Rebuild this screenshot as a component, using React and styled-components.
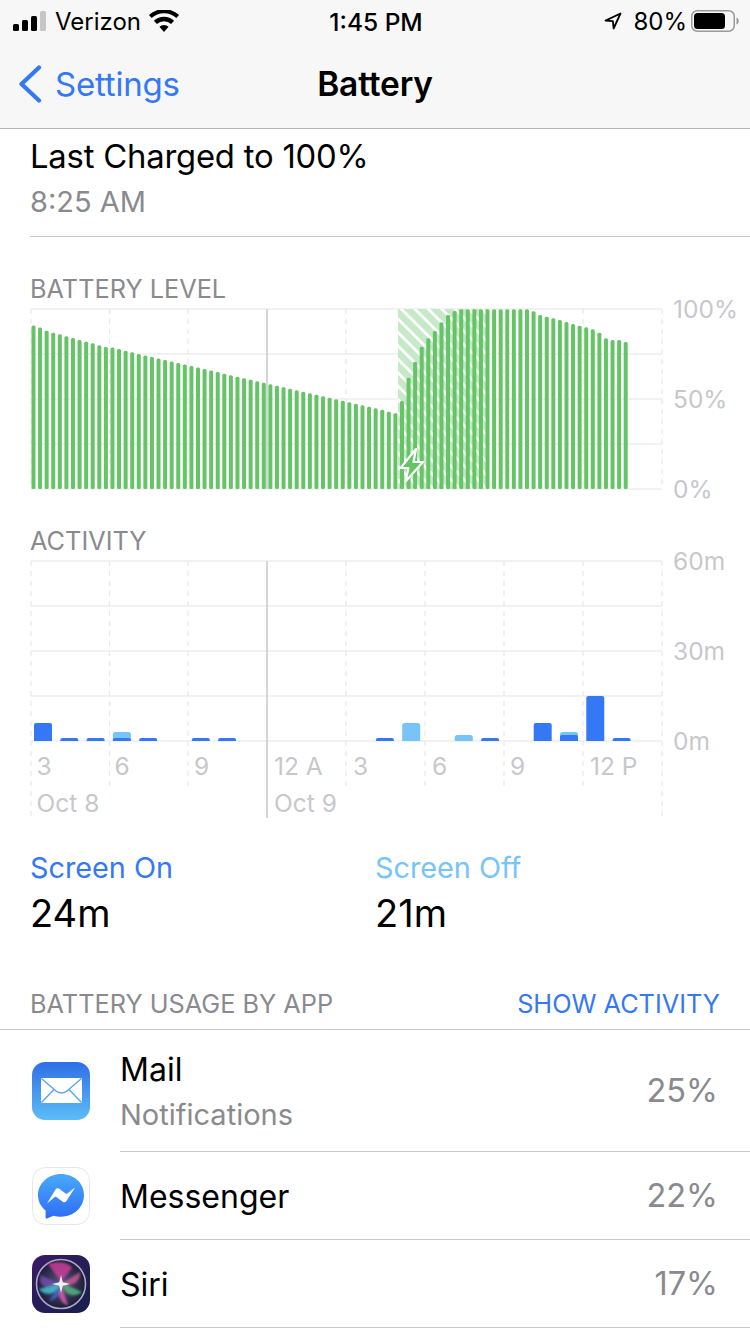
import React from "react";
import styled, { createGlobalStyle } from "styled-components";

const GlobalStyle = createGlobalStyle`
  html, body {
    margin: 0;
    padding: 0;
    background: #fff;
  }
  body {
    font-family: Inter, "Noto Sans", "Liberation Sans", sans-serif;
  }
`;

const BLUE = "#3478f6";
const LIGHT_BLUE = "#76c4f8";
const GREEN = "#65c466";
const GREY = "#8a8a8e";
const AXIS = "#c7c7cc";

const GRID_X = [31, 109.5, 188, 267, 346, 425, 504, 583, 662];

// top of each battery bar, read from the screenshot
const batteryTops = [
  325.5, 327.5, 330.7, 332.7, 334.3, 336.3, 338, 340, 341.7, 343.3, 345.3, 347,
  347.5, 349, 350.7, 352.3, 354,
];
for (let i = 17; i < 54; i++) batteryTops.push(354 + (i - 16) * 1.51);
batteryTops.push(
  411.7, 413.3, 401, 377.7, 361.7, 346.7, 338.3, 331, 322.3, 315, 311, 309.3,
);
for (let i = 66; i < 76; i++) batteryTops.push(309.3);
batteryTops.push(
  311.3, 315, 316.7, 318.3, 320, 322, 324, 325.7, 327.3, 329.3, 332.7, 338.3,
  340, 340, 342,
);

// slot index, screen on px, screen off px
const activity = [
  { slot: 0, on: 18, off: 0 },
  { slot: 1, on: 3, off: 0 },
  { slot: 2, on: 3, off: 0 },
  { slot: 3, on: 3, off: 6 },
  { slot: 4, on: 3, off: 0 },
  { slot: 6, on: 3, off: 0 },
  { slot: 7, on: 3, off: 0 },
  { slot: 13, on: 3, off: 0 },
  { slot: 14, on: 0, off: 18 },
  { slot: 16, on: 0, off: 6 },
  { slot: 17, on: 3, off: 0 },
  { slot: 19, on: 18, off: 0 },
  { slot: 20, on: 6, off: 3 },
  { slot: 21, on: 45, off: 0 },
  { slot: 22, on: 3, off: 0 },
];

const hourLabels = [
  ["3", 36.5],
  ["6", 114.5],
  ["9", 194],
  ["12 A", 274],
  ["3", 353],
  ["6", 432],
  ["9", 510],
  ["12 P", 590],
];

const Screen = styled.div`
  width: 750px;
  height: 1334px;
  overflow: hidden;
  background: #fff;
  color: #000;
`;

const Header = styled.header`
  height: 128px;
  background: #f7f7f7;
  border-bottom: 1px solid #b4b4b6;
`;

const StatusBar = styled.div`
  height: 42px;
  display: grid;
  grid-template-columns: 1fr auto 1fr;
  align-items: center;
  padding: 0 11px 0 13px;
  font-size: 24px;
`;

const StatusLeft = styled.div`
  display: flex;
  align-items: center;
  gap: 8px;
`;

const StatusRight = styled.div`
  display: flex;
  align-items: center;
  justify-content: flex-end;
  gap: 11px;
`;

const BatteryPercent = styled.span`
  margin-right: -7px;
`;

const Time = styled.div`
  font-weight: 500;
  font-size: 24.5px;
  padding-top: 1px;
`;

const NavBar = styled.nav`
  height: 84px;
  display: grid;
  grid-template-columns: 1fr auto 1fr;
  align-items: center;
  padding: 0 18px;
`;

const BackLink = styled.div`
  display: flex;
  align-items: center;
  gap: 13px;
  color: ${BLUE};
  font-size: 33px;
  letter-spacing: -0.2px;
`;

const NavTitle = styled.div`
  font-size: 33.5px;
  font-weight: 600;
  letter-spacing: -0.2px;
`;

const ChargeBlock = styled.section`
  height: 108px;
  margin-left: 30px;
  border-bottom: 1px solid #c8c8ca;
  box-sizing: border-box;
  padding-top: 6px;
`;

const ChargeTitle = styled.div`
  font-size: 32.8px;
  line-height: 42px;
  letter-spacing: -0.2px;
`;

const ChargeTime = styled.div`
  font-size: 29px;
  line-height: 50px;
  color: ${GREY};
`;

const SectionLabel = styled.div`
  padding-left: 30px;
  font-size: 25.3px;
  line-height: 22px;
  color: ${GREY};
  padding-top: ${(p) => p.$top}px;
`;

const ChartSvg = styled.svg`
  display: block;
  width: 750px;
  overflow: visible;
`;

const AxisText = styled.text`
  font-size: 24.5px;
  fill: ${AXIS};
  dominant-baseline: central;
`;

const Legend = styled.section`
  display: grid;
  grid-template-columns: 345px 1fr;
  padding: 27px 0 0 30px;
  height: 140px;
  box-sizing: border-box;
`;

const LegendName = styled.div`
  font-size: 28.8px;
  line-height: 38px;
  color: ${(p) => p.$color};
`;

const LegendValue = styled.div`
  font-size: 38px;
  line-height: 52px;
`;

const UsageHeader = styled.div`
  height: 68px;
  box-sizing: border-box;
  border-bottom: 1px solid #c8c8ca;
  display: flex;
  justify-content: space-between;
  align-items: flex-start;
  padding: 27px 30px 0;
  font-size: 25.3px;
  line-height: 30px;
  color: ${GREY};
`;

const ShowActivity = styled.span`
  color: ${BLUE};
`;

const AppRow = styled.div`
  display: flex;
  height: ${(p) => p.$height}px;
`;

const IconSlot = styled.div`
  width: 120px;
  flex: none;
  display: flex;
  align-items: center;
  padding-left: 32px;
  box-sizing: border-box;
`;

const RowBody = styled.div`
  flex: 1;
  display: flex;
  align-items: center;
  justify-content: space-between;
  padding-right: 32px;
  border-bottom: 1px solid #c8c8ca;
`;

const AppName = styled.div`
  font-size: 32px;
  line-height: 45px;
  padding-top: 2px;
`;

const AppNote = styled.div`
  font-size: 29px;
  line-height: 45px;
  color: ${GREY};
`;

const Percent = styled.div`
  font-size: 32.5px;
  color: ${GREY};
`;

const AppIcon = styled.svg`
  display: block;
  width: 58px;
  height: 58px;
`;

const StatusIcon = styled.svg`
  display: block;
  flex: none;
`;

const SignalIcon = () => (
  <StatusIcon width="34" height="20" viewBox="0 0 34 20">
    <rect x="0" y="13" width="6" height="7" rx="1.5" fill="#000" />
    <rect x="9" y="9" width="6" height="11" rx="1.5" fill="#000" />
    <rect x="18" y="5" width="6" height="15" rx="1.5" fill="#000" />
    <rect x="27" y="0" width="6" height="20" rx="1.5" fill="#c6c6c8" />
  </StatusIcon>
);

const WifiIcon = () => (
  <StatusIcon width="30" height="22" viewBox="0 0 30 22">
    <path
      d="M15 22l-4.6-5.2a6.8 6.8 0 0 1 9.2 0z M7.9 14l-3-3.3a15 15 0 0 1 20.2 0l-3 3.3a10.6 10.6 0 0 0-14.2 0z M2.6 8.1L0 5.1a22 22 0 0 1 30 0l-2.6 3a18.2 18.2 0 0 0-24.8 0z"
      fill="#000"
    />
  </StatusIcon>
);

const LocationIcon = () => (
  <StatusIcon width="18" height="18" viewBox="0 0 18 18">
    <path
      d="M16.500 1.500L1.500 8.600l7.400.6.7 7.300z"
      fill="none"
      stroke="#000"
      strokeWidth="1.800"
      strokeLinejoin="round"
    />
  </StatusIcon>
);

const BatteryIcon = () => (
  <StatusIcon width="48" height="22" viewBox="0 0 48 22">
    <rect x="0.75" y="0.75" width="42.5" height="20.5" rx="5.5" fill="none" stroke="#9a9a9c" strokeWidth="1.5" />
    <rect x="3" y="3" width="31" height="16" rx="3.5" fill="#000" />
    <path d="M45.500 7.500c1.400.5 2.200 1.900 2.200 3.500s-.8 3-2.200 3.500z" fill="#9a9a9c" />
  </StatusIcon>
);

const BackChevron = () => (
  <StatusIcon width="24" height="38" viewBox="0 0 24 38">
    <path
      d="M21 2.500L3.500 19 21 35.500"
      fill="none"
      stroke={BLUE}
      strokeWidth="4.200"
      strokeLinecap="round"
      strokeLinejoin="round"
    />
  </StatusIcon>
);

const MailIcon = () => (
  <AppIcon viewBox="0 0 58 58">
    <defs>
      <linearGradient id="mailBg" x1="0" y1="0" x2="0" y2="1">
        <stop offset="0" stopColor="#2f6fe6" />
        <stop offset="1" stopColor="#5dbdf7" />
      </linearGradient>
    </defs>
    <rect width="58" height="58" rx="13" fill="url(#mailBg)" />
    <rect x="9" y="16" width="41" height="25" rx="1" fill="#fff" />
    <path
      d="M9.500 16.500L24 29c3 2.600 8 2.600 11 0L49.500 16.500M9.500 40.500L22 27.500M49.500 40.500L37 27.500"
      fill="none"
      stroke="#5aa5f0"
      strokeWidth="1.400"
    />
  </AppIcon>
);

const MessengerIcon = () => (
  <AppIcon viewBox="0 0 58 58">
    <defs>
      <linearGradient id="msgBg" x1="0" y1="0" x2="0" y2="1">
        <stop offset="0" stopColor="#48aaf9" />
        <stop offset="1" stopColor="#2f6cf6" />
      </linearGradient>
    </defs>
    <rect x="0.5" y="0.5" width="57" height="57" rx="13" fill="#fff" stroke="#e6e6e8" />
    <path
      d="M29 7C16.300 7 6 16.400 6 28.100c0 6.200 2.900 11.700 7.600 15.500v7c0 .8.800 1.300 1.500 1l6.300-2.900a25 25 0 0 0 7.600 1.100c12.700 0 23-9.300 23-21.700S41.700 7 29 7z"
      fill="url(#msgBg)"
    />
    <path
      d="M15 36.500L23.500 22.500c.9-1.300 2.600-1.600 3.800-.7l6.300 4.700c.5.400 1.200.400 1.700 0L43 20.500 34.500 34c-.9 1.300-2.600 1.600-3.800.7l-6.300-4.700c-.5-.4-1.200-.4-1.700 0z"
      fill="#fff"
    />
  </AppIcon>
);

const SiriIcon = () => (
  <AppIcon viewBox="0 0 58 58">
    <defs>
      <linearGradient id="siriBg" x1="0" y1="0" x2="1" y2="1">
        <stop offset="0" stopColor="#3a1a66" />
        <stop offset="1" stopColor="#14204a" />
      </linearGradient>
      <radialGradient id="siriOrb" cx="0.5" cy="0.5" r="0.55">
        <stop offset="0" stopColor="#5a5a80" />
        <stop offset="1" stopColor="#161630" />
      </radialGradient>
      <filter id="siriBlur" x="-20%" y="-20%" width="140%" height="140%">
        <feGaussianBlur stdDeviation="1.300" />
      </filter>
    </defs>
    <rect width="58" height="58" rx="13" fill="url(#siriBg)" />
    <circle cx="29" cy="29" r="24.500" fill="url(#siriOrb)" stroke="#a8a8c4" strokeWidth="1.600" />
    <g filter="url(#siriBlur)">
      <path d="M29 27L16 9c10-3 20-2 24 4z" fill="#c93c98" opacity="0.85" />
      <path d="M27 29L9 20c-3 8 1 16 18 9z" fill="#7f52c0" opacity="0.7" />
      <path d="M29 29L48 17c1 8-6 16-19 12z" fill="#e0609a" opacity="0.7" />
      <path d="M30 28L50 37c-8 6-18 4-20-9z" fill="#4fb07a" opacity="0.9" />
      <path d="M28 29L7 34c7 8 17 6 21-5z" fill="#3fc4d4" opacity="0.85" />
      <path d="M29 29L36 50c-7-1-12-10-7-21z" fill="#d85aa8" opacity="0.85" />
      <path d="M29 29L17 46c7-1 13-7 12-17z" fill="#4a6fe0" opacity="0.7" />
    </g>
    <path d="M29 20l1.800 7.200 7.200 1.800-7.200 1.800L29 38l-1.800-7.200L20 29l7.200-1.800z" fill="#fff" opacity="0.9" />
  </AppIcon>
);

const BatteryChart = () => (
  <ChartSvg height="200" viewBox="0 300 750 200">
    <defs>
      <pattern
        id="chargeHatch"
        width="9.5"
        height="9.5"
        patternUnits="userSpaceOnUse"
        patternTransform="rotate(-45 398 309)"
      >
        <rect width="9.5" height="9.5" fill="#c6e9c8" />
        <rect width="2.800" height="9.5" fill="#fff" />
      </pattern>
    </defs>
    {[309, 354, 399, 444, 489].map((y) => (
      <line key={y} x1="31" x2="662" y1={y} y2={y} stroke="#eeeeee" strokeWidth="1.500" />
    ))}
    {GRID_X.map((x) => (
      <line
        key={x}
        x1={x}
        x2={x}
        y1="309"
        y2="489"
        stroke={x === 267 ? "#c9c9cb" : "#e8e8ea"}
        strokeWidth={x === 267 ? 1.500 : 1.200}
        strokeDasharray={x === 267 ? undefined : "5 5"}
      />
    ))}
    <rect x="398" y="309" width="90" height="180" fill="url(#chargeHatch)" />
    {batteryTops.map((top, i) => (
      <rect
        key={i}
        x={31.5 + i * 6.58}
        y={top}
        width="4"
        height={489 - top}
        rx="1.500"
        fill={GREEN}
      />
    ))}
    <path
      d="M416 449L400.500 468h8L405.500 481.500 423 462h-9.500z"
      fill={GREEN}
      stroke="#fff"
      strokeWidth="2.200"
      strokeLinejoin="round"
    />
    <AxisText x="673" y="309">100%</AxisText>
    <AxisText x="673" y="399">50%</AxisText>
    <AxisText x="673" y="489">0%</AxisText>
  </ChartSvg>
);

const ActivityChart = () => (
  <ChartSvg height="270" viewBox="0 552 750 270">
    {[561, 606, 651, 696, 741].map((y) => (
      <line key={y} x1="31" x2="662" y1={y} y2={y} stroke="#eeeeee" strokeWidth="1.500" />
    ))}
    {GRID_X.map((x) => {
      const isDay = x === 31 || x === 267 || x === 662;
      return (
        <line
          key={x}
          x1={x}
          x2={x}
          y1="561"
          y2={isDay ? 818 : 786}
          stroke={x === 267 ? "#c9c9cb" : "#e8e8ea"}
          strokeWidth={x === 267 ? 1.500 : 1.200}
          strokeDasharray={x === 267 ? undefined : "5 5"}
        />
      );
    })}
    {activity.map(({ slot, on, off }) => {
      const x = 34 + slot * 26.3;
      return (
        <g key={slot}>
          {off > 0 && (
            <path
              d={`M${x} 741v${-(on + off) + 2.5}a2.500 2.500 0 0 1 2.500 -2.500h13a2.500 2.500 0 0 1 2.500 2.500v${on + off - 2.5}z`}
              fill={LIGHT_BLUE}
            />
          )}
          {on > 0 && (
            <path
              d={`M${x} 741v${-on + 2}a2 2 0 0 1 2 -2h14a2 2 0 0 1 2 2v${on - 2}z`}
              fill={BLUE}
            />
          )}
        </g>
      );
    })}
    {hourLabels.map(([label, x], i) => (
      <AxisText key={i} x={x} y="766">{label}</AxisText>
    ))}
    <AxisText x="36.5" y="803">Oct 8</AxisText>
    <AxisText x="274" y="803">Oct 9</AxisText>
    <AxisText x="673" y="561">60m</AxisText>
    <AxisText x="673" y="651">30m</AxisText>
    <AxisText x="673" y="741">0m</AxisText>
  </ChartSvg>
);

const App = () => {
  return (
    <>
      <GlobalStyle />
      <Screen>
        <Header>
          <StatusBar>
            <StatusLeft>
              <SignalIcon />
              <span>Verizon</span>
              <WifiIcon />
            </StatusLeft>
            <Time>1:45 PM</Time>
            <StatusRight>
              <LocationIcon />
              <BatteryPercent>80%</BatteryPercent>
              <BatteryIcon />
            </StatusRight>
          </StatusBar>
          <NavBar>
            <BackLink>
              <BackChevron />
              Settings
            </BackLink>
            <NavTitle>Battery</NavTitle>
          </NavBar>
        </Header>

        <ChargeBlock>
          <ChargeTitle>Last Charged to 100%</ChargeTitle>
          <ChargeTime>8:25 AM</ChargeTime>
        </ChargeBlock>

        <SectionLabel $top={41}>BATTERY LEVEL</SectionLabel>
        <BatteryChart />
        <SectionLabel $top={30}>ACTIVITY</SectionLabel>
        <ActivityChart />

        <Legend>
          <div>
            <LegendName $color={BLUE}>Screen On</LegendName>
            <LegendValue>24m</LegendValue>
          </div>
          <div>
            <LegendName $color={LIGHT_BLUE}>Screen Off</LegendName>
            <LegendValue>21m</LegendValue>
          </div>
        </Legend>

        <UsageHeader>
          <span>BATTERY USAGE BY APP</span>
          <ShowActivity>SHOW ACTIVITY</ShowActivity>
        </UsageHeader>

        <AppRow $height={122}>
          <IconSlot>
            <MailIcon />
          </IconSlot>
          <RowBody>
            <div>
              <AppName>Mail</AppName>
              <AppNote>Notifications</AppNote>
            </div>
            <Percent>25%</Percent>
          </RowBody>
        </AppRow>
        <AppRow $height={88}>
          <IconSlot>
            <MessengerIcon />
          </IconSlot>
          <RowBody>
            <AppName>Messenger</AppName>
            <Percent>22%</Percent>
          </RowBody>
        </AppRow>
        <AppRow $height={88}>
          <IconSlot>
            <SiriIcon />
          </IconSlot>
          <RowBody>
            <AppName>Siri</AppName>
            <Percent>17%</Percent>
          </RowBody>
        </AppRow>
      </Screen>
    </>
  );
};

export default App;
